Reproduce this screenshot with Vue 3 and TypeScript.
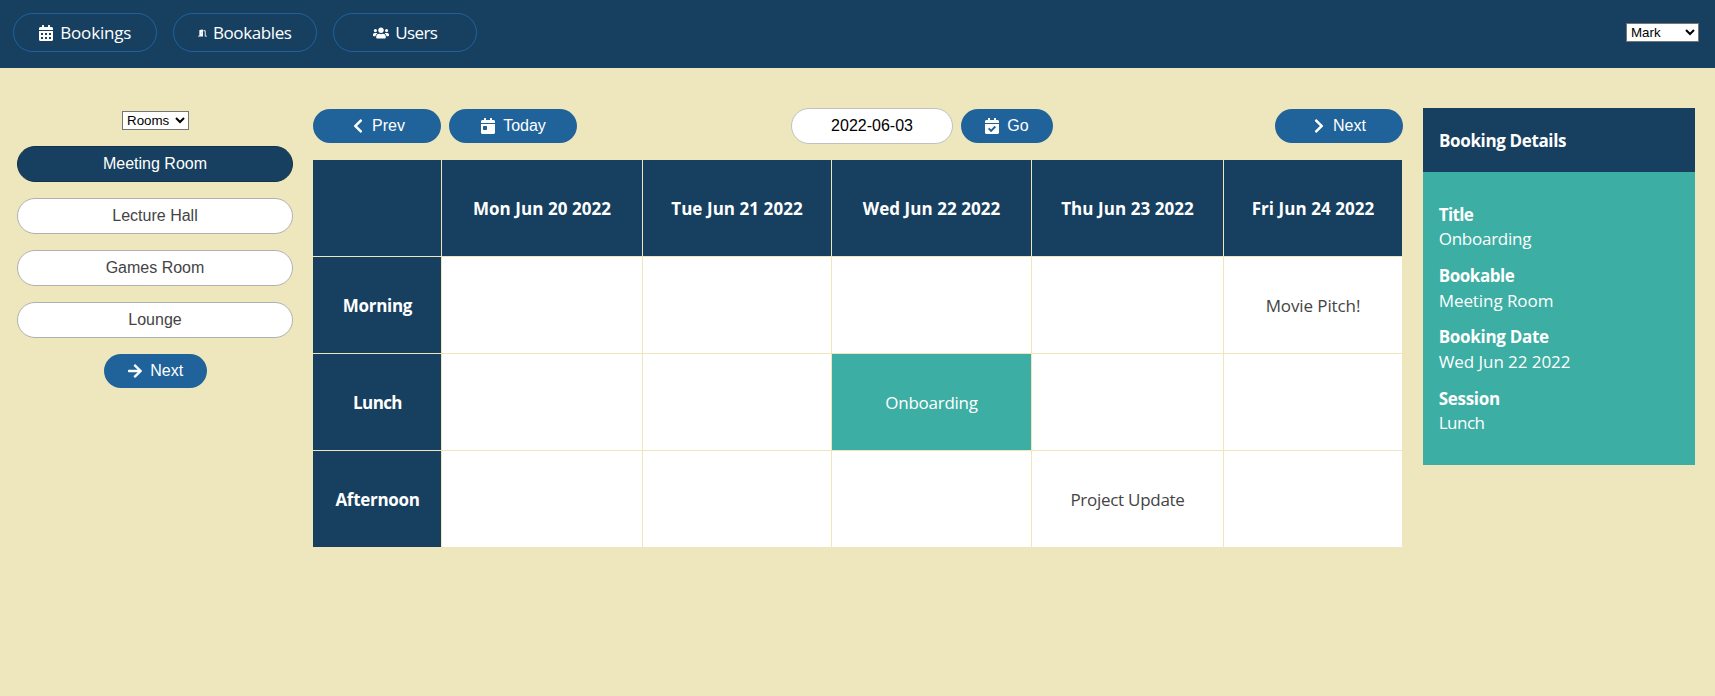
<script setup lang="ts">
import { ref } from 'vue'

interface Icon {
  width: number
  paths: string[]
  flip?: boolean
}

interface Label {
  text: string
  tracking: number
}

const calendarTop =
  'M400 64h-48V16c0-8.8-7.2-16-16-16h-32c-8.8 0-16 7.2-16 16v48H160V16c0-8.8-7.2-16-16-16h-32c-8.8 0-16 7.2-16 16v48H48C21.5 64 0 85.5 0 112v48h448v-48c0-26.5-21.5-48-48-48z'
const daySquare = (x: number, y: number) =>
  `M${x + 12} ${y}h40c6.6 0 12 5.4 12 12v40c0 6.600-5.400 12-12 12h-40c-6.600 0-12-5.400-12-12v-40c0-6.600 5.400-12 12-12z`
const chevron =
  'M34.52 239.03L228.87 44.69c9.37-9.37 24.57-9.37 33.94 0l22.67 22.67c9.36 9.36 9.37 24.52.04 33.9L131.49 256l154.02 154.75c9.34 9.38 9.32 24.54-.04 33.9l-22.67 22.67c-9.37 9.37-24.57 9.37-33.94 0L34.52 272.97c-9.37-9.37-9.37-24.57 0-33.94z'

const icons: Record<string, Icon> = {
  calendar: {
    width: 448,
    paths: [
      calendarTop,
      'M0 464c0 26.500 21.500 48 48 48h352c26.500 0 48-21.500 48-48V192H0v272z' +
        [64, 192, 320].map((x) => daySquare(x, 256) + daySquare(x, 384)).join(''),
    ],
  },
  calendarDay: {
    width: 448,
    paths: [
      calendarTop,
      'M0 464c0 26.500 21.500 48 48 48h352c26.500 0 48-21.500 48-48V192H0v272zm64-192c0-8.800 7.200-16 16-16h96c8.800 0 16 7.200 16 16v96c0 8.800-7.200 16-16 16H80c-8.800 0-16-7.200-16-16v-96z',
    ],
  },
  calendarCheck: {
    width: 448,
    paths: [
      'M436 160H12c-6.627 0-12-5.373-12-12v-36c0-26.510 21.490-48 48-48h48V12c0-6.627 5.373-12 12-12h40c6.627 0 12 5.373 12 12v52h128V12c0-6.627 5.373-12 12-12h40c6.627 0 12 5.373 12 12v52h48c26.510 0 48 21.490 48 48v36c0 6.627-5.373 12-12 12zM12 192h424c6.627 0 12 5.373 12 12v260c0 26.510-21.490 48-48 48H48c-26.510 0-48-21.490-48-48V204c0-6.627 5.373-12 12-12zm333.296 95.947l-28.169-28.398c-4.667-4.705-12.265-4.736-16.970-.068L194.120 364.665l-45.980-46.352c-4.667-4.705-12.266-4.736-16.971-.068l-28.397 28.170c-4.705 4.667-4.736 12.265-.068 16.970l82.601 83.269c4.667 4.705 12.265 4.736 16.970.068l142.953-141.805c4.705-4.667 4.736-12.265.068-16.970z',
    ],
  },
  door: {
    width: 640,
    paths: [
      'M624 448h-80V113.450C544 86.190 522.470 64 496 64H384v64h96v384h144c8.840 0 16-7.160 16-16v-32c0-8.840-7.160-16-16-16zM312.240 1.010l-192 49.740C105.990 54.440 96 67.700 96 82.920V448H16c-8.840 0-16 7.160-16 16v32c0 8.840 7.160 16 16 16h336V33.180c0-21.580-19.560-37.410-39.760-32.170zM264 288c-13.250 0-24-14.330-24-32s10.750-32 24-32 24 14.330 24 32-10.750 32-24 32z',
    ],
  },
  users: {
    width: 640,
    paths: [
      'M96 224c35.300 0 64-28.700 64-64s-28.700-64-64-64-64 28.700-64 64 28.700 64 64 64zm448 0c35.300 0 64-28.700 64-64s-28.700-64-64-64-64 28.700-64 64 28.700 64 64 64zm32 32h-64c-17.600 0-33.500 7.100-45.100 18.600 40.300 22.100 68.900 62 75.100 109.400h66c17.700 0 32-14.300 32-32v-32c0-35.300-28.700-64-64-64zm-256 0c61.900 0 112-50.100 112-112S381.900 32 320 32 208 82.100 208 144s50.100 112 112 112zm76.800 32h-8.300c-20.800 10-43.900 16-68.500 16s-47.600-6-68.500-16h-8.300C179.600 288 128 339.600 128 403.200V432c0 26.500 21.500 48 48 48h288c26.500 0 48-21.500 48-48v-28.800c0-63.600-51.600-115.200-115.200-115.200zm-223.700-13.400C161.500 263.100 145.600 256 128 256H64c-35.300 0-64 28.700-64 64v32c0 17.700 14.300 32 32 32h65.900c6.300-47.400 34.900-87.300 75.200-109.400z',
    ],
  },
  chevronLeft: { width: 320, paths: [chevron] },
  chevronRight: { width: 320, paths: [chevron], flip: true },
  arrowRight: {
    width: 448,
    paths: [
      'M190.500 66.900l22.200-22.200c9.400-9.400 24.600-9.400 33.900 0L441 239c9.400 9.400 9.400 24.600 0 33.900L246.600 467.300c-9.400 9.400-24.600 9.400-33.900 0l-22.200-22.200c-9.500-9.500-9.300-25 .4-34.300L311.400 296H24c-13.300 0-24-10.700-24-24v-32c0-13.300 10.700-24 24-24h287.400L190.900 101.200c-9.800-9.300-10-24.800-.4-34.300z',
    ],
  },
}

const nav = [
  { text: 'Bookings', tracking: -0.18, icon: 'calendar', size: 14, gap: 7.5 },
  { text: 'Bookables', tracking: -0.39, icon: 'door', size: 9, gap: 5.5 },
  { text: 'Users', tracking: -0.65, icon: 'users', size: 16, gap: 6.5 },
]

const users = ['Mark', 'Clarisse', 'Sanjiv']
const groups = ['Rooms', 'Kit']
const user = ref('Mark')
const group = ref('Rooms')
const startDate = ref('2022-06-03')

const bookables = ['Meeting Room', 'Lecture Hall', 'Games Room', 'Lounge']
const selected = ref(0)

const days = ['Mon Jun 20 2022', 'Tue Jun 21 2022', 'Wed Jun 22 2022', 'Thu Jun 23 2022', 'Fri Jun 24 2022']

const sessions: { name: Label; bookings: (Label | null)[] }[] = [
  {
    name: { text: 'Morning', tracking: -0.3 },
    bookings: [null, null, null, null, { text: 'Movie Pitch!', tracking: -0.1 }],
  },
  {
    name: { text: 'Lunch', tracking: -0.6 },
    bookings: [null, null, { text: 'Onboarding', tracking: -0.25 }, null, null],
  },
  {
    name: { text: 'Afternoon', tracking: -0.3 },
    bookings: [null, null, null, { text: 'Project Update', tracking: -0.28 }, null],
  },
]
const activeBooking = 'Onboarding'

const details: { term: Label; value: Label }[] = [
  { term: { text: 'Title', tracking: -0.65 }, value: { text: 'Onboarding', tracking: -0.25 } },
  { term: { text: 'Bookable', tracking: -0.45 }, value: { text: 'Meeting Room', tracking: -0.07 } },
  { term: { text: 'Booking Date', tracking: -0.3 }, value: { text: 'Wed Jun 22 2022', tracking: -0.06 } },
  { term: { text: 'Session', tracking: -0.3 }, value: { text: 'Lunch', tracking: -0.5 } },
]

const track = (label: { tracking: number }) => ({ letterSpacing: `${label.tracking}px` })
</script>

<template>
  <div class="app">
    <header class="topbar">
      <nav class="nav">
        <a v-for="item in nav" :key="item.text" class="nav-link" :style="{ gap: `${item.gap}px` }">
          <svg
            class="icon"
            :width="item.size"
            height="16"
            :viewBox="`0 0 ${icons[item.icon].width} 512`"
          >
            <path v-for="d in icons[item.icon].paths" :key="d" :d="d" fill-rule="evenodd" />
          </svg>
          <span :style="track(item)">{{ item.text }}</span>
        </a>
      </nav>
      <select v-model="user" class="picker user-picker">
        <option v-for="u in users" :key="u">{{ u }}</option>
      </select>
    </header>

    <main class="page">
      <aside class="sidebar">
        <select v-model="group" class="picker group-picker">
          <option v-for="g in groups" :key="g">{{ g }}</option>
        </select>
        <button
          v-for="(name, i) in bookables"
          :key="name"
          class="bookable"
          :class="{ selected: i === selected }"
          @click="selected = i"
        >
          {{ name }}
        </button>
        <button class="btn btn-page">
          <svg class="icon" width="14" height="16" viewBox="0 0 448 512">
            <path :d="icons.arrowRight.paths[0]" />
          </svg>
          <span>Next</span>
        </button>
      </aside>

      <section class="calendar">
        <div class="controls">
          <div class="control-group">
            <button class="btn btn-wide btn-prev">
              <svg class="icon" width="10" height="16" viewBox="0 0 320 512">
                <path :d="icons.chevronLeft.paths[0]" />
              </svg>
              <span>Prev</span>
            </button>
            <button class="btn btn-wide btn-today">
              <svg class="icon" width="14" height="16" viewBox="0 0 448 512">
                <path v-for="d in icons.calendarDay.paths" :key="d" :d="d" fill-rule="evenodd" />
              </svg>
              <span>Today</span>
            </button>
          </div>
          <div class="control-group date-group">
            <input v-model="startDate" class="date" type="text" />
            <button class="btn btn-go">
              <svg class="icon" width="14" height="16" viewBox="0 0 448 512">
                <path :d="icons.calendarCheck.paths[0]" fill-rule="evenodd" />
              </svg>
              <span>Go</span>
            </button>
          </div>
          <button class="btn btn-wide btn-next">
            <svg class="icon flip" width="10" height="16" viewBox="0 0 320 512">
              <path :d="icons.chevronRight.paths[0]" />
            </svg>
            <span>Next</span>
          </button>
        </div>

        <div class="grid">
          <div class="cell head"></div>
          <div v-for="day in days" :key="day" class="cell head day">{{ day }}</div>
          <template v-for="session in sessions" :key="session.name.text">
            <div class="cell head session"><span :style="track(session.name)">{{ session.name.text }}</span></div>
            <div
              v-for="(booking, i) in session.bookings"
              :key="i"
              class="cell"
              :class="{ active: booking?.text === activeBooking }"
            >
              <span v-if="booking" :style="track(booking)">{{ booking.text }}</span>
            </div>
          </template>
        </div>
      </section>

      <aside class="details">
        <h2 class="details-title">Booking Details</h2>
        <dl class="details-body">
          <div v-for="item in details" :key="item.term.text" class="field">
            <dt :style="track(item.term)">{{ item.term.text }}</dt>
            <dd :style="track(item.value)">{{ item.value.text }}</dd>
          </div>
        </dl>
      </aside>
    </main>
  </div>
</template>

<style>
body {
  margin: 0;
  background: #eee6bc;
}
</style>

<style scoped>
.app {
  min-height: 696px;
  box-sizing: border-box;
  background: #eee6bc;
  color: #444;
  font-family: 'Open Sans', 'Noto Sans', sans-serif;
  font-size: 17px;
}

.app *,
.app *::before {
  box-sizing: border-box;
}

.icon {
  flex: none;
  fill: currentColor;
}

.flip {
  transform: scaleX(-1);
}

.topbar {
  display: flex;
  align-items: center;
  justify-content: space-between;
  height: 68px;
  padding: 0 16px 3px 13px;
  background: #173f5f;
}

.nav {
  display: flex;
  gap: 16px;
}

.nav-link {
  display: flex;
  align-items: center;
  justify-content: center;
  width: 144px;
  height: 39px;
  border: 1px solid #20639b;
  border-radius: 20px;
  color: #fff;
  white-space: nowrap;
}

.picker {
  height: 19px;
  padding: 0;
  border: 1px solid #767676;
  border-radius: 0;
  background-color: #fff;
  color: #000;
  font: 13.333px 'Liberation Sans', Arial, sans-serif;
}

.user-picker {
  width: 73px;
}

.group-picker {
  width: 67px;
  margin: 3px 0 0 1px;
}

.page {
  display: grid;
  grid-template-columns: 276px 1090px 272px;
  gap: 20px;
  align-items: start;
  padding: 40px 20px 0 17px;
}

.sidebar {
  display: flex;
  flex-direction: column;
  align-items: center;
  gap: 16px;
}

.bookable {
  width: 276px;
  height: 36px;
  padding: 0 0 1px;
  border: 1px solid #b0b0b0;
  border-radius: 18px;
  background: #fff;
  color: #444;
  font: 16px 'Liberation Sans', Arial, sans-serif;
}

.bookable.selected {
  border-color: #12324c;
  background: #173f5f;
  color: #fff;
}

.btn {
  display: flex;
  align-items: center;
  justify-content: center;
  gap: 8px;
  height: 34px;
  padding: 0;
  border: 0;
  border-radius: 17px;
  background: #20639b;
  color: #fff;
  font: 16px/18px 'Liberation Sans', Arial, sans-serif;
}

.btn span {
  padding-bottom: 1px;
}

.btn-page {
  width: 103px;
  padding-left: 1.5px;
}

.btn-wide {
  width: 128px;
}

.btn-prev {
  gap: 9px;
  padding-left: 4px;
}

.btn-today {
  padding-left: 1px;
}

.btn-next {
  gap: 9px;
  padding-left: 2px;
}

.btn-go {
  width: 92px;
}

.controls {
  display: flex;
  align-items: center;
  justify-content: space-between;
  height: 36px;
  margin-bottom: 16px;
}

.control-group {
  display: flex;
  align-items: center;
  gap: 8px;
}

.date-group {
  margin-right: 8px;
}

.date {
  width: 162px;
  height: 36px;
  padding: 0 0 1px;
  border: 1px solid #c0c0c0;
  border-radius: 18px;
  background: #fff;
  color: #000;
  font: 16px 'Liberation Sans', Arial, sans-serif;
  text-align: center;
}

.grid {
  display: grid;
  grid-template-columns: 128px 200px 188px 199px 191px 178px;
  grid-auto-rows: 96px;
  gap: 1px;
}

.cell {
  display: flex;
  align-items: center;
  justify-content: center;
  background: #fff;
  white-space: nowrap;
}

.head {
  background: #173f5f;
  color: #fff;
  font-weight: 700;
}

.day {
  padding-top: 1px;
  letter-spacing: 0.06px;
}

.session {
  padding-left: 1px;
}

.active {
  background: #3caea3;
  color: #fff;
}

.details {
  color: #fff;
}

.details-title {
  display: flex;
  align-items: center;
  height: 64px;
  margin: 0;
  padding: 1px 16px 0;
  background: #173f5f;
  font-size: 17px;
  font-weight: 700;
  letter-spacing: -0.36px;
}

.details-body {
  display: flex;
  flex-direction: column;
  gap: 12px;
  height: 293px;
  margin: 0;
  padding: 30.8px 15.7px 0;
  background: #3caea3;
  line-height: 24.64px;
}

.details-body dt {
  font-weight: 700;
}

.details-body dd {
  margin: 0;
}
</style>
